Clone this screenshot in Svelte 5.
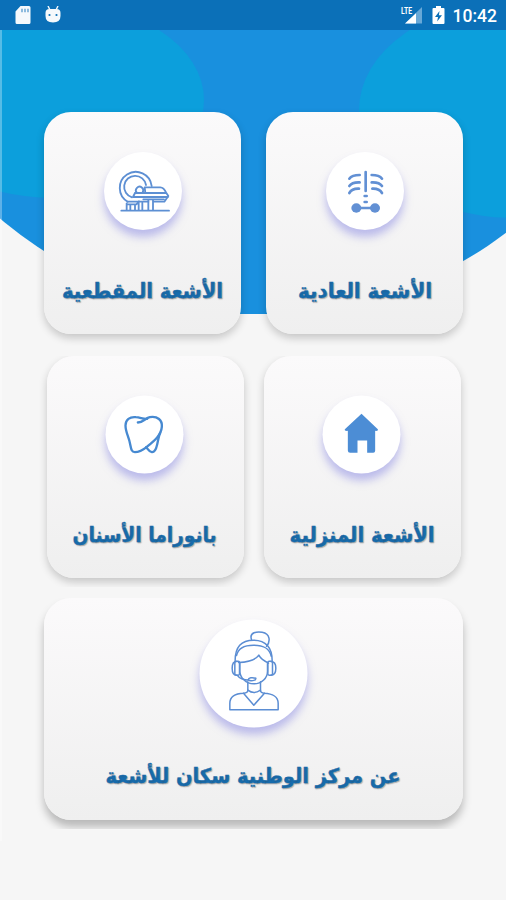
<script>
    const rows = [
        {
            name: 'top',
            cards: [
                { icon: 'scanner', label: 'الأشعة المقطعية', width: 161, view: '41 35 234 234' },
                { icon: 'ribs', label: 'الأشعة العادية', width: 134, view: '47 35 234 234' }
            ]
        },
        {
            name: 'middle',
            cards: [
                { icon: 'tooth', label: 'بانوراما الأسنان', width: 144, view: '50 32 234 234' },
                { icon: 'home', label: 'الأشعة المنزلية', width: 145, view: '37 32 234 234' }
            ]
        },
        {
            name: 'bottom',
            cards: [
                { icon: 'agent', label: 'عن مركز الوطنية سكان للأشعة', width: 295, view: '42 28 324 324' }
            ]
        }
    ];
</script>

<div class="screen">
    <header class="status-bar">
        <div class="status-left">
            <svg width="16" height="19" viewBox="0 0 16 19">
                <path fill="#f5f9fc" d="M5.5 0H14a1.5 1.5 0 0 1 1.5 1.5v15A1.5 1.5 0 0 1 14 18H2a1.5 1.5 0 0 1-1.5-1.5V5.5z" />
                <path stroke="#6ba6d4" stroke-width="1.5" d="M7 2.7v3.6M10 2.7v3.6M13 2.7v3.6" />
            </svg>
            <svg width="17" height="19" viewBox="0 0 17 19">
                <path stroke="#f5f9fc" stroke-width="1.4" d="M3 0l2 4M13 0l-2 4" />
                <path fill="#f5f9fc" d="M.5 7q0-4 4-4h7q4 0 4 4v3q0 6.500-7.500 6.500T.5 10z" />
                <circle cx="4.500" cy="9" r="1.1" fill="#0b70b8" />
                <circle cx="11.500" cy="9" r="1.1" fill="#0b70b8" />
            </svg>
        </div>
        <div class="status-right">
            <svg width="23" height="19" viewBox="0 0 23 19">
                <path fill="#68a8d7" d="M22 1v16.500H5z" />
                <path fill="#fff" d="M16 7.2v10.300H5z" />
                <path fill="#0b70b8" d="M0 0h12.500v9H0z" />
                <text x="1" y="8" textLength="11" lengthAdjust="spacingAndGlyphs" class="lte">LTE</text>
            </svg>
            <svg class="battery" width="13" height="19" viewBox="0 0 13 19">
                <path fill="#fff" d="M4 0h5v2h2.500a1 1 0 0 1 1 1v14a1 1 0 0 1-1 1h-10a1 1 0 0 1-1-1V3a1 1 0 0 1 1-1H4z" />
                <path fill="#0b70b8" d="M7.500 5L3 11h3l-.8 4.500L10 9.200H6.900z" />
            </svg>
            <span class="time">10:42</span>
        </div>
    </header>

    <svg class="backdrop" width="506" height="284" viewBox="0 30 506 284">
        <defs>
            <clipPath id="dome">
                <circle cx="262" cy="-91" r="405.500" />
            </clipPath>
        </defs>
        <g clip-path="url(#dome)">
            <rect y="30" width="506" height="285" fill="#1990de" />
            <ellipse cx="54" cy="100" rx="150" ry="98" fill="#0c9fdc" />
            <ellipse cx="514" cy="110" rx="155" ry="108" fill="#0c9fdc" />
        </g>
    </svg>
    <div class="edge"></div>

    <main>
        {#each rows as row}
            <div class="row {row.name}">
                {#each row.cards as card}
                    <section class="card">
                        <div class="disc">
                            <svg viewBox={card.view}>
                                {#if card.icon === 'scanner'}
                                    <g class="line">
                                        <path d="M112 184A48 48 0 1 1 184 137" />
                                        <path d="M125 171A33 33 0 1 1 167 134" />
                                        <path d="M139 157a11 11 0 1 1 18-1" />
                                        <path d="M163 141h47c9 0 14 8 18 17H165zM134 158h94l6 9-12 17h-32M134 158l-6 12h105M112 184h62" />
                                        <path d="M93 211h143M109 189v21M120 194v16M134 194v16M145 187v23M156 187v23M174 180v30M188 180v30M113 192h25l8-9M159 177h62" />
                                    </g>
                                {:else if card.icon === 'ribs'}
                                    <g class="bone">
                                        <path d="M166 95v57" />
                                        <path d="M117 115q8-11 31-11M117 137q8-12 31-11M117 158q8-14 29-13" />
                                        <path d="M215 115q-8-11-31-11M215 137q-8-12-31-11M215 158q-8-14-29-13" />
                                        <path d="M163 167h6M163 185h6" />
                                        <path d="M142 203h48" />
                                    </g>
                                    <ellipse class="solid" cx="138" cy="203" rx="15" ry="14" />
                                    <ellipse class="solid" cx="194" cy="203" rx="15" ry="14" />
                                {:else if card.icon === 'tooth'}
                                    <g class="enamel">
                                        <path d="M147 113c17 0 19-12 36-16 23-4 38 9 36 29-2 25-22 41-45 60-16 13-26 16-36 16-10 0-11-9-14-24-4-22-14-36-14-56 0-18 13-27 31-25 14 1 22 6 34 5" />
                                        <path d="M214 144c-5 11-6 22-9 35-4 18-8 24-16 23-9-1-11-9-17-15" />
                                    </g>
                                {:else if card.icon === 'home'}
                                    <path class="house" d="M154 87l49 46q2 6-8 5v60q0 6-6 6h-18v-37h-29v37h-22q-7 0-7-7v-59q-11 1-9-5z" />
                                {:else}
                                    <g class="person">
                                        <path d="M198 88c-8-23 18-24 32-22 25 4 25 29 13 42" />
                                        <path d="M149 154c-1-44 19-64 55-64s57 21 56 65" />
                                        <path d="M153 136c4-19 17-31 51-31s48 11 53 33" />
                                        <path d="M159 157c33-1 51-8 61-22 5 10 17 18 29 24" />
                                        <path d="M163 159v24c0 18 18 38 42 38s41-18 41-38v-24" />
                                        <path d="M153 154c-8 0-13 8-13 20s5 21 13 21M256 154c10 0 15 8 15 20s-5 21-15 21" />
                                        <rect x="148" y="153" width="14" height="42" rx="4" />
                                        <rect x="247" y="153" width="14" height="42" rx="4" />
                                        <path d="M155 195c8 12 20 15 36 15M188 209c1-7 12-8 23-5 1 8-17 10-23 5z" />
                                        <path d="M187 215v25q0 8-12 9c-28 1-42 13-42 30v20h145v-20c0-18-16-29-42-30q-11-1-11-9v-25" />
                                        <path d="M174 249l31 36 32-36M187 240q18 14 38 0" />
                                    </g>
                                {/if}
                            </svg>
                        </div>
                        <svg class="label" width={card.width} height="34">
                            <text x={card.width / 2} y="23" textLength={card.width} lengthAdjust="spacingAndGlyphs">{card.label}</text>
                        </svg>
                    </section>
                {/each}
            </div>
        {/each}
    </main>
</div>

<style>
    :global(body) {
        background: #f6f6f6;
    }

    .screen {
        position: relative;
        width: 506px;
        height: 900px;
        overflow: hidden;
        background: #f6f6f6;
    }

    .status-bar {
        display: flex;
        justify-content: space-between;
        height: 30px;
        box-sizing: border-box;
        padding: 6px 9px 0 15px;
        background: #0b70b8;
    }

    .status-left {
        display: flex;
        gap: 14px;
    }

    .status-right {
        display: flex;
        align-items: flex-start;
    }

    .battery {
        margin-left: 9px;
    }

    .time {
        margin: 0 0 0 8px;
        color: #fff;
        font: 500 17.500px/20px Roboto, sans-serif;
    }

    .lte {
        fill: #fff;
        font: 700 9px Roboto, sans-serif;
    }

    .backdrop {
        position: absolute;
        top: 30px;
        left: 0;
    }

    .edge {
        position: absolute;
        top: 30px;
        left: 0;
        width: 2px;
        height: 811px;
        background: rgba(255, 255, 255, 0.3);
    }

    main {
        position: relative;
        display: flex;
        flex-direction: column;
        align-items: center;
        padding: 82px 0 0;
    }

    .row {
        display: flex;
        justify-content: space-between;
        width: 419px;
        height: 231px;
        padding: 0 44px 0 45px;
        overflow: hidden;
        margin-bottom: 13px;
    }

    .top {
        overflow: visible;
    }

    .middle {
        width: 414px;
        margin-bottom: 11px;
    }

    .card {
        display: flex;
        flex-direction: column;
        align-items: center;
        width: 197px;
        height: 222px;
        border-radius: 27px;
        background: linear-gradient(#fbfafb, #efefef);
        box-shadow: 0 4px 9px rgba(0, 0, 0, 0.2);
    }

    .bottom .card {
        width: 100%;
        box-shadow: 0 7px 8px rgba(0, 0, 0, 0.25);
    }

    .disc {
        width: 78px;
        height: 78px;
        margin-top: 40px;
        border-radius: 50%;
        background: #fff;
        box-shadow: 0 7px 8px rgba(130, 130, 225, 0.5);
    }

    .bottom .disc {
        width: 108px;
        height: 108px;
        margin-top: 22px;
    }

    .middle .disc,
    .middle .label,
    .bottom .disc,
    .bottom .label {
        transform: translate(-0.5px, -0.5px);
    }

    .disc svg {
        display: block;
    }

    .line,
    .bone,
    .enamel,
    .person {
        fill: none;
        stroke: #5d8fd3;
        stroke-width: 5.5;
        stroke-linecap: round;
        stroke-linejoin: round;
    }

    .bone {
        stroke: #6290d4;
        stroke-width: 8;
    }

    .enamel {
        stroke: #4689d1;
        stroke-width: 7;
    }

    .person {
        stroke: #5b8dd3;
        stroke-width: 4.5;
    }

    .solid {
        fill: #6290d4;
    }

    .house {
        fill: #4c8dd5;
    }

    .label {
        margin-top: 45px;
        overflow: visible;
    }

    .bottom .label {
        margin-top: 32px;
    }

    .label text {
        fill: #176cad;
        stroke: #176cad;
        stroke-width: 0.4;
        text-anchor: middle;
        direction: rtl;
        font: 700 20.500px "DejaVu Sans", sans-serif;
        text-shadow: 1px 1px 1px rgba(60, 60, 60, 0.35);
    }
</style>
